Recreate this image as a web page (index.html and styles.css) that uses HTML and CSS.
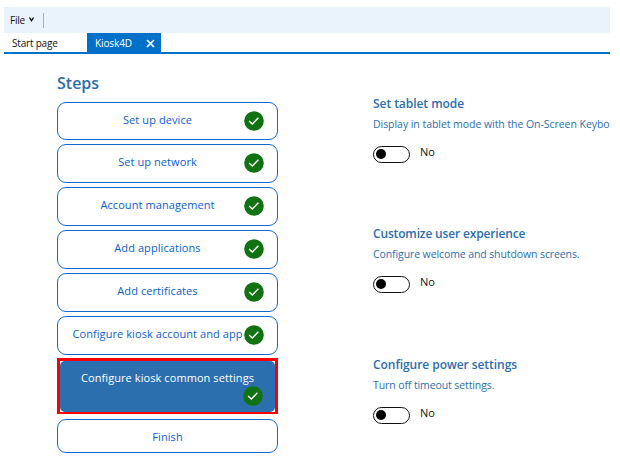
FILE: index.html
```html
<!DOCTYPE html>
<html lang="en">
<head>
<meta charset="utf-8">
<title>Kiosk4D</title>
<link rel="stylesheet" href="styles.css">
</head>
<body>
<svg class="defs" width="0" height="0">
  <symbol id="check" viewBox="0 0 20 20"><circle cx="10" cy="10" r="9.8" fill="#107210"/><path d="M5.1 10.1 8.3 13 14.4 6.8" fill="none" stroke="#fff" stroke-width="1.4"/></symbol>
</svg>
<div class="window">
  <header class="menubar">
    <span class="file">File</span>
    <svg class="chevron" width="5" height="5" viewBox="0 0 5 5"><path d="M.5.5 2.5 3.7 4.5.5" fill="none" stroke="#111" stroke-width="1.3"/></svg>
    <span class="divider"></span>
  </header>
  <nav class="tabs">
    <div class="tab"><span class="start">Start page</span></div>
    <div class="tab active"><span>Kiosk4D</span>
      <svg width="9" height="9" viewBox="0 0 9 9"><path d="M1 1 8 8M8 1 1 8" stroke="#fff" stroke-width="1.7"/></svg>
    </div>
  </nav>
  <main>
    <section class="steps">
      <h1>Steps</h1>
      <div class="step first"><span>Set up device</span><svg><use href="#check"/></svg></div>
      <div class="step"><span>Set up network</span><svg><use href="#check"/></svg></div>
      <div class="step"><span>Account management</span><svg><use href="#check"/></svg></div>
      <div class="step"><span>Add applications</span><svg><use href="#check"/></svg></div>
      <div class="step"><span>Add certificates</span><svg><use href="#check"/></svg></div>
      <div class="step last"><span>Configure kiosk account and app</span><svg><use href="#check"/></svg></div>
      <div class="highlight"><div class="step current"><span>Configure kiosk common settings</span><svg><use href="#check"/></svg></div></div>
      <div class="step finish"><span>Finish</span></div>
    </section>
    <section class="settings">
      <article><h2>Set tablet mode</h2><p class="wide">Display in tablet mode with the On-Screen Keybo</p><div class="switch"><i></i><span>No</span></div></article>
      <article><h2 class="tight">Customize user experience</h2><p>Configure welcome and shutdown screens.</p><div class="switch"><i></i><span>No</span></div></article>
      <article><h2>Configure power settings</h2><p>Turn off timeout settings.</p><div class="switch"><i></i><span>No</span></div></article>
    </section>
  </main>
</div>
</body>
</html>
```
FILE: styles.css
```css
* { box-sizing: border-box; }
body { margin: 0; background: #fff; font-family: "Open Sans", "Noto Sans", sans-serif; overflow: hidden; }
svg { display: block; flex: none; }
.defs { position: absolute; }
.window { width: 606px; margin: 7px 0 0 4px; }
.menubar { height: 26px; background: #eaf2fc; display: flex; align-items: center; padding-left: 6px; font-size: 10px; color: #111; }
.file { width: 16px; letter-spacing: -0.2px; }
.chevron { margin: 0 0 1px 3px; }
.divider { width: 1px; height: 15px; background: #a9b1bb; margin-left: 9px; }
.tabs { height: 21px; display: flex; border-bottom: 2px solid #0070c8; font-size: 10px; color: #111; }
.tab { width: 83px; padding-left: 8px; display: flex; align-items: center; height: 20px; }
.start { letter-spacing: -0.2px; }
.tab.active { width: 74px; background: #0070c8; color: #fff; letter-spacing: -0.1px; }
.tab svg { margin-left: auto; margin-right: 6px; }
main { display: flex; }
.steps { width: 221px; margin-left: 53px; }
h1 { margin: 18px 0 0; height: 30px; font-size: 16px; line-height: 22px; font-weight: 600; color: #2c6eb0; }
.step { height: 39px; margin-bottom: 4px; border: 1px solid #1268d3; border-radius: 9px; display: flex; align-items: center; padding-right: 13px; font-size: 11px; line-height: 16px; letter-spacing: 0.08px; color: #0b60cf; white-space: nowrap; }
.step.first { height: 38px; }
.step.last { margin-bottom: 3px; }
.step span { flex: 1; text-align: center; padding: 0 0 3px 13px; }
.step svg { width: 20px; height: 20px; margin-bottom: 1px; }
.highlight { height: 56px; border: solid #f60008; border-width: 3px 3px 2px; margin-bottom: 5px; }
.step.current { height: 51px; border: 0; border-radius: 5px; background: #2b6fae; color: #fff; flex-direction: column; align-items: flex-end; padding: 9px 12px 0 0; }
.step.current span { flex: none; width: 203px; padding: 0 0 0 12px; }
.step.finish { height: 34px; padding: 0; }
.step.finish span { padding: 2px 0 0; }
.settings { margin: 41px 0 0 95px; width: 238px; overflow: hidden; }
article { height: 130px; color: #2c6eb0; white-space: nowrap; }
article:nth-child(2) { height: 131px; }
h2 { margin: 0; font-size: 12px; line-height: 18px; font-weight: 600; letter-spacing: -0.05px; }
.tight { letter-spacing: -0.16px; }
p { margin: 3px 0 0; font-size: 10.5px; line-height: 16px; letter-spacing: -0.1px; }
.wide { letter-spacing: -0.05px; }
.switch { display: flex; margin-top: 14px; color: #111; font-size: 11px; line-height: 12px; }
.switch i { width: 37px; height: 17px; border: 1px solid #111; border-radius: 9px; padding: 2px 0 0 2px; }
.switch i::before { content: ""; display: block; width: 10px; height: 10px; border-radius: 50%; background: #000; }
.switch span { margin-left: 10px; }
```
